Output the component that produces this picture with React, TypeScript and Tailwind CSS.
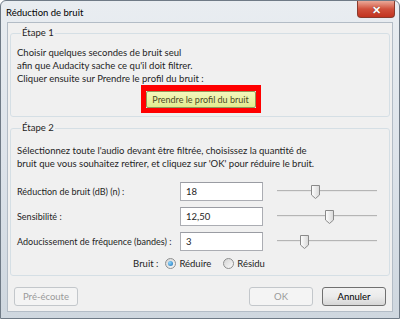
import React from "react"

const font = { fontFamily: 'Lato, "Liberation Sans", sans-serif' }

const Slider = ({ pos }: { pos: number }) => (
    <div className="relative w-[100px] h-[18px]">
        <div className="absolute top-[6px] w-full h-[2px] bg-[#e6e6e6] border-t border-[#b5b5b5]" />
        <svg className="absolute top-0" style={{ left: pos }} width="11" height="16" viewBox="0 0 11 16">
            <defs>
                <linearGradient id="thumbg" x1="0" y1="0" x2="1" y2="0">
                    <stop offset="0" stopColor="#ffffff" />
                    <stop offset="1" stopColor="#d8d8d8" />
                </linearGradient>
            </defs>
            <path d="M1.5 1.5 h8 v9.5 l-4 3.5 l-4 -3.5 z" fill="url(#thumbg)" stroke="#8a8a8a" strokeLinejoin="round" />
        </svg>
    </div>
)

const Row = ({ label, value, pos }: { label: string, value: string, pos: number }) => (
    <div className="flex items-center h-[19px]">
        <span className="w-[163px] text-[9px]">{label}</span>
        <div className="w-[83px] h-[19px] bg-white border border-[#abadb3] border-t-[#9a9ca3] pl-[5px] flex items-center">{value}</div>
        <div className="ml-[14px] mt-[2px]"><Slider pos={pos} /></div>
    </div>
)

const Radio = ({ checked }: { checked?: boolean }) => (
    <span className="w-[11px] h-[11px] rounded-full border border-[#8e8f8f] bg-gradient-to-br from-[#d4d4d4] to-[#fafafa] flex items-center justify-center">
        {checked && <span className="w-[5px] h-[5px] rounded-full bg-[radial-gradient(circle_at_35%_35%,#8fd8ff,#1a6fb5)]" />}
    </span>
)

export default function App() {
    return (
        <div style={font} className="w-[400px] h-[319px] flex flex-col bg-gradient-to-b from-[#e9edf1] via-[#dde3ea] to-[#cfd7df] border border-[#6f7a86] rounded-t-[6px] text-[9.5px] text-[#1e1e1e] overflow-hidden whitespace-nowrap">
            {/* title bar */}
            <div className="h-[21px] shrink-0 flex items-start justify-between pl-[5px]">
                <span className="text-[9.5px] text-black mt-[5px]">Réduction de bruit</span>
                <div className="mr-[4px] w-[38px] h-[17px] rounded-b-[4px] border border-t-0 border-[#8a3a2c] bg-gradient-to-b from-[#eaa898] via-[#d0503c] to-[#c2331f] flex items-center justify-center">
                    <span className="text-white text-[11px] font-bold leading-none [text-shadow:0_0_1px_#5a1a10]">✕</span>
                </div>
            </div>
            {/* client area */}
            <div className="mx-[6px] mb-[6px] flex-1 bg-[#f0f0f0] border border-[#b3bcc6] flex flex-col px-[2px] leading-[13px]">
                <fieldset className="h-[91px] mt-[3px] border border-[#d5dfe5] rounded-[3px] px-[6px]">
                    <legend className="ml-[4px] px-[1px] leading-[14px]">Étape 1</legend>
                    <div className="mt-[6px]">
                        <div>Choisir quelques secondes de bruit seul</div>
                        <div>afin que Audacity sache ce qu'il doit filtrer.</div>
                        <div>Cliquer ensuite sur Prendre le profil du bruit :</div>
                    </div>
                    <div className="flex justify-center">
                        <div className="border-[5px] border-t-[6px] border-[#ff0000] ml-[1px]">
                            <div className="w-[110px] h-[17px] border border-[#8f9a5a] rounded-[2px] bg-gradient-to-b from-[#f4f8bc] to-[#e2eb90] flex items-center justify-center text-[#4a4a1e] text-[9px]">
                                Prendre le profil du bruit
                            </div>
                        </div>
                    </div>
                </fieldset>
                <fieldset className="h-[155px] mt-[4px] border border-[#d5dfe5] rounded-[3px] px-[6px]">
                    <legend className="ml-[4px] px-[1px] leading-[14px]">Étape 2</legend>
                    <div className="mt-[9px]">
                        <div>Sélectionnez toute l'audio devant être filtrée, choisissez la quantité de</div>
                        <div>bruit que vous souhaitez retirer, et cliquez sur 'OK' pour réduire le bruit.</div>
                    </div>
                    <div className="flex flex-col gap-[6px] mt-[12px]">
                        <Row label="Réduction de bruit (dB) (n) :" value="18" pos={33} />
                        <Row label="Sensibilité :" value="12,50" pos={47} />
                        <Row label="Adoucissement de fréquence (bandes) :" value="3" pos={22} />
                    </div>
                    <div className="flex items-center justify-center mt-[5px] h-[14px] pr-[2px]">
                        <span className="mr-[7px]">Bruit :</span>
                        <Radio checked />
                        <span className="ml-[3px] mr-[12px]">Réduire</span>
                        <Radio />
                        <span className="ml-[3px]">Résidu</span>
                    </div>
                </fieldset>
                <div className="flex items-center mt-[11px] px-[4px]">
                    <div className="w-[64px] h-[19px] border border-[#c3c7cb] rounded-[3px] bg-[#f4f4f4] text-[#9a9a9a] flex items-center justify-center">Pré-écoute</div>
                    <div className="flex-1" />
                    <div className="w-[64px] h-[19px] border border-[#c3c7cb] rounded-[3px] bg-[#f4f4f4] text-[#9a9a9a] flex items-center justify-center">OK</div>
                    <div className="ml-[9px] w-[64px] h-[19px] border border-[#707070] rounded-[3px] bg-gradient-to-b from-[#f2f2f2] via-[#ebebeb] to-[#d6d6d6] text-black flex items-center justify-center">Annuler</div>
                </div>
            </div>
        </div>
    )
}
